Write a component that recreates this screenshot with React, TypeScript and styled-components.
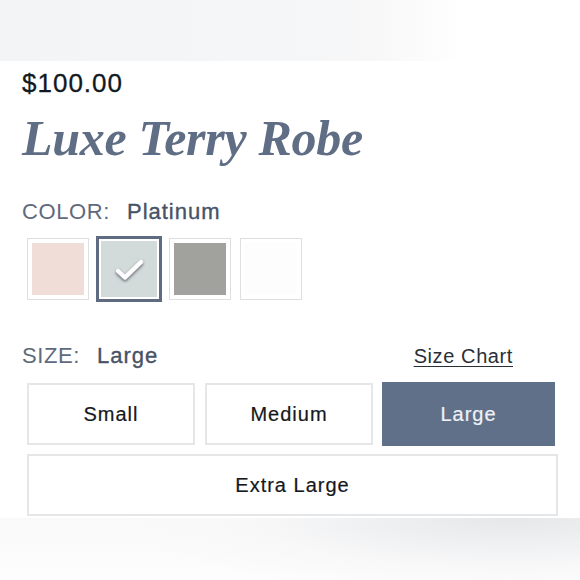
import styled, { createGlobalStyle } from "styled-components";

const GlobalStyle = createGlobalStyle`
  html, body {
    margin: 0;
    padding: 0;
    background: #ffffff;
  }
  body {
    font-family: "Liberation Sans", Arial, sans-serif;
  }
`;

type Swatch = { name: string; color: string };

const swatches: Swatch[] = [
  { name: "Blush", color: "#f1ddd7" },
  { name: "Platinum", color: "#d3dbda" },
  { name: "Stone", color: "#a1a29d" },
  { name: "White", color: "#fdfdfd" },
];

const sizes = ["Small", "Medium", "Large", "Extra Large"];

const CheckIcon = () => (
  <svg width="34" height="28" viewBox="0 0 34 28">
    <defs>
      <filter id="checkShadow" x="-30%" y="-30%" width="160%" height="160%">
        <feDropShadow dx="0" dy="1.5" stdDeviation="1.6" floodColor="#3b4250" floodOpacity="0.85" />
      </filter>
    </defs>
    <path
      d="M6 16 L13 22.5 L29 7"
      fill="none"
      stroke="#ffffff"
      strokeWidth="4.2"
      strokeLinecap="round"
      strokeLinejoin="round"
      filter="url(#checkShadow)"
    />
  </svg>
);

const App = () => {
  const selectedColor = "Platinum";
  const selectedSize = "Large";

  return (
    <>
      <GlobalStyle />
      <Page>
        <TopBand />
        <Content>
          <Price>$100.00</Price>
          <Title>Luxe Terry Robe</Title>

          <OptionLabel>
            <LabelKey>COLOR:</LabelKey>
            <LabelValue>{selectedColor}</LabelValue>
          </OptionLabel>
          <SwatchRow>
            {swatches.map((s) => (
              <SwatchBox key={s.name} selected={s.name === selectedColor} title={s.name}>
                <SwatchFill color={s.color}>
                  {s.name === selectedColor && <CheckIcon />}
                </SwatchFill>
              </SwatchBox>
            ))}
          </SwatchRow>

          <SizeHeader>
            <OptionLabel>
              <LabelKey>SIZE:</LabelKey>
              <LabelValue>{selectedSize}</LabelValue>
            </OptionLabel>
            <SizeChart href="#">Size Chart</SizeChart>
          </SizeHeader>
          <SizeGrid>
            {sizes.map((size) => (
              <SizeButton key={size} selected={size === selectedSize} wide={size === "Extra Large"}>
                {size}
              </SizeButton>
            ))}
          </SizeGrid>
        </Content>
        <BottomBand />
      </Page>
    </>
  );
};

export default App;

const Page = styled.div`
  width: 580px;
  height: 580px;
  display: flex;
  flex-direction: column;
  overflow: hidden;
  background: #ffffff;
`;

const TopBand = styled.div`
  height: 61px;
  flex: none;
  background: linear-gradient(90deg, #f3f4f5 0%, #f5f6f7 50%, #f8f8f9 66%, #fdfdfd 76%, #ffffff 80%);
`;

const BottomBand = styled.div`
  flex: 1;
  margin-top: 2px;
  background:
    radial-gradient(ellipse 70% 120% at 88% 0%, #e6e7e9 0%, #eff0f1 35%, #f8f8f9 65%, rgba(255, 255, 255, 0) 100%),
    linear-gradient(180deg, #f9f9fa 0%, #fdfdfd 100%);
`;

const Content = styled.div`
  padding: 0 0 0 22px;
  display: flex;
  flex-direction: column;
`;

const Price = styled.div`
  margin-top: 7px;
  font-size: 26px;
  line-height: 30px;
  letter-spacing: 1px;
  color: #111923;
  -webkit-text-stroke: 0.3px #111923;
`;

const Title = styled.h1`
  margin: 12px 0 0;
  font-family: "Liberation Serif", "Times New Roman", serif;
  font-style: italic;
  font-weight: 700;
  font-size: 50px;
  line-height: 56px;
  letter-spacing: -0.3px;
  color: #5f6d85;
`;

const OptionLabel = styled.div`
  margin-top: 33px;
  display: flex;
  align-items: baseline;
  gap: 17px;
  font-size: 22px;
  line-height: 26px;
  letter-spacing: 0.6px;
`;

const LabelKey = styled.span`
  color: #5f6a7c;
`;

const LabelValue = styled.span`
  color: #475266;
  letter-spacing: 1px;
  -webkit-text-stroke: 0.35px #475266;
`;

const SwatchRow = styled.div`
  margin: 13px 0 0 5px;
  display: flex;
  gap: 9px;
`;

const SwatchBox = styled.div<{ selected: boolean }>`
  box-sizing: border-box;
  width: 62px;
  height: 62px;
  border: 1px solid #dedfe1;
  padding: ${(p) => (p.selected ? "2px" : "4px")};
  background: #ffffff;
  outline: ${(p) => (p.selected ? "3px solid #5e6b80" : "none")};
  outline-offset: -1px;
  display: flex;
`;

const SwatchFill = styled.div<{ color: string }>`
  flex: 1;
  background: ${(p) => p.color};
  display: flex;
  align-items: center;
  justify-content: center;
`;

const SizeHeader = styled.div`
  margin-top: 10px;
  display: flex;
  justify-content: space-between;
  align-items: baseline;
  padding-right: 67px;
`;

const SizeChart = styled.a`
  font-size: 20px;
  letter-spacing: 0.6px;
  color: #2a2f37;
  text-decoration: underline;
  text-underline-offset: 3px;
  text-decoration-thickness: 1px;
`;

const SizeGrid = styled.div`
  margin: 14px 0 0 5px;
  display: grid;
  grid-template-columns: 168px 168px 171px;
  column-gap: 10px;
  row-gap: 9px;
`;

const SizeButton = styled.div<{ selected: boolean; wide: boolean }>`
  box-sizing: border-box;
  height: 62px;
  grid-column: ${(p) => (p.wide ? "1 / -1" : "auto")};
  margin-right: ${(p) => (p.wide ? "-4px" : "0")};
  display: flex;
  align-items: center;
  justify-content: center;
  border: 2px solid ${(p) => (p.selected ? "#617089" : "#e5e6e7")};
  background: ${(p) => (p.selected ? "#617089" : "#ffffff")};
  color: ${(p) => (p.selected ? "#eef1f5" : "#15181c")};
  font-size: 20px;
  letter-spacing: 1px;
  -webkit-text-stroke: 0.2px ${(p) => (p.selected ? "#eef1f5" : "#15181c")};
  outline: ${(p) => (p.selected ? "1px solid #617089" : "none")};
`;
